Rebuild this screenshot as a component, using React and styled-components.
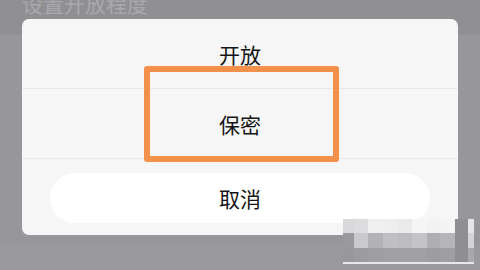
import React from "react";
import styled, { createGlobalStyle } from "styled-components";

const Global = createGlobalStyle`
  html, body { margin: 0; padding: 0; }
  body { width: 480px; height: 270px; overflow: hidden; font-family: "Noto Sans CJK SC", "Noto Sans", sans-serif; }
`;

const Page = styled.div`
  position: relative;
  width: 480px;
  height: 270px;
  overflow: hidden;
  background: linear-gradient(to bottom, #909094 0 35px, #97979b 35px 246px, #9a9a9e 246px);
  display: flex;
  flex-direction: column;
`;

const HeaderTitle = styled.div`
  height: 19px;
  padding-left: 22px;
  font-size: 21px;
  line-height: 21px;
  color: #a9a9ad;
  overflow: visible;
  & > span { display: block; margin-top: -7px; }
`;

const Dialog = styled.div`
  position: relative;
  margin: 0 22px;
  height: 216px;
  background: #f6f6f6;
  border-radius: 7px;
  display: flex;
  flex-direction: column;
`;

const Option = styled.div`
  height: 69px;
  display: flex;
  align-items: center;
  justify-content: center;
  font-size: 21px;
  color: #151515;
  border-bottom: 1px solid #e8e8e8;
`;

const CancelArea = styled.div`
  flex: 1;
  padding: 14px 28px 0 28px;
`;

const CancelButton = styled.div`
  height: 50px;
  border-radius: 25px;
  background: #ffffff;
  display: flex;
  align-items: center;
  justify-content: center;
  font-size: 21px;
  color: #151515;
`;

const Highlight = styled.div`
  position: absolute;
  left: 144px;
  top: 66px;
  width: 195px;
  height: 96px;
  box-sizing: border-box;
  border: 6px solid #f3914a;
  border-radius: 3px;
  pointer-events: none;
`;

const Mosaic = styled.div`
  position: absolute;
  left: 343px;
  top: 219px;
  display: grid;
  grid-template-columns: 11px 14px 15px 15px 14px 15px 13px 15px 13px 6px;
  grid-template-rows: 14px 15px 14px 2px;
`;

const Cell = styled.div`
  background: ${(p) => p.$c};
`;

const mosaic = [
  ["#d9d9db", "#dcdcde", "#f0f0f0", "#eeeeee", "#ebebeb", "#f5f5f5", "#f2f2f2", "#f4f4f4", "#8f8f93", "#e6e6e8"],
  ["#9a9a9e", "#cacacd", "#b3b3b6", "#c0c0c3", "#bdbdc0", "#c4c4c6", "#afafb3", "#b6b6b9", "#8f8f93", "#d4d4d6"],
  ["#98989c", "#9c9ca0", "#9f9fa3", "#a0a0a4", "#a1a1a5", "#a0a0a4", "#9d9da1", "#9f9fa3", "#8f8f93", "#a9a9ac"],
  ["#e8e8ea", "#e8e8ea", "#e8e8ea", "#e8e8ea", "#e8e8ea", "#e8e8ea", "#e8e8ea", "#e8e8ea", "#e8e8ea", "#e8e8ea"],
];

export default function App() {
  return (
    <>
      <Global />
      <Page>
        <HeaderTitle>
          <span>设置开放程度</span>
        </HeaderTitle>
        <Dialog>
          <Option>开放</Option>
          <Option>保密</Option>
          <CancelArea>
            <CancelButton>取消</CancelButton>
          </CancelArea>
        </Dialog>
        <Highlight />
        <Mosaic>
          {mosaic.flat().map((c, i) => (
            <Cell key={i} $c={c} />
          ))}
        </Mosaic>
      </Page>
    </>
  );
}
